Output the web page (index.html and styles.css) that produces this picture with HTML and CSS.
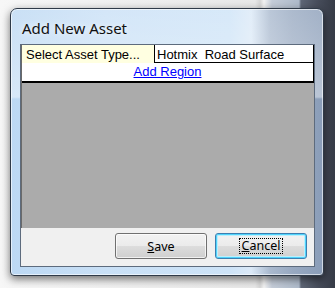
FILE: index.html
```html
<!DOCTYPE html>
<html lang="en">
<head>
    <meta charset="UTF-8">
    <title>Add New Asset</title>
    <link rel="stylesheet" href="styles.css">
</head>
<body>
    <div class="window">
        <div class="title-bar">Add New Asset</div>
        <div class="client">
            <div class="grid">
                <div class="row">
                    <div class="cell type-cell">Select Asset Type...</div>
                    <div class="cell value-cell">Hotmix  Road Surface</div>
                </div>
                <div class="row link-row">
                    <a href="#" class="add-link">Add Region</a>
                </div>
            </div>
            <div class="button-bar">
                <button class="btn"><u>S</u>ave</button>
                <button class="btn btn-default"><span class="focus"><u>C</u>ancel</span></button>
            </div>
        </div>
    </div>
</body>
</html>
```

FILE: styles.css
```css
html, body {
    margin: 0;
    padding: 0;
}

body {
    width: 335px;
    height: 288px;
    overflow: hidden;
    padding-top: 8px;
    box-sizing: border-box;
    background: linear-gradient(to right, #f7f7f7 0, #e8e8e8 255px, #d6d6d6 260px, #f3f3f3 264px, #c4ccd8 272px, #aebaca 299px, #5e6676 301px, #474d5b 318px, #363b46 335px);
}

.window {
    margin-left: 10px;
    width: 314px;
    height: 268px;
    box-sizing: border-box;
    border: 1px solid #2f3a48;
    border-radius: 7px 7px 4px 4px;
    padding: 0 8px 8px 9px;
    background:
        linear-gradient(to bottom, rgba(255, 255, 255, 0.2) 0, rgba(255, 255, 255, 0.4) 88px, rgba(255, 255, 255, 0) 90px),
        linear-gradient(to right, #bcd8f3 0, #c9e0f6 30%, #cde3f7 70%, #dbe9f7 77%, #a9b9ce 83%, #98a9c1 90%, #8a9db8 100%);
    box-shadow: inset 0 0 0 1px rgba(255, 255, 255, 0.6), 0 3px 9px rgba(0, 0, 0, 0.55);
}

.title-bar {
    height: 35px;
    box-sizing: border-box;
    padding: 9px 0 0 2px;
    font-family: "Noto Sans", sans-serif;
    font-size: 15px;
    line-height: 20px;
    color: #101010;
    text-shadow: 0 0 6px rgba(255, 255, 255, 0.9);
}

.client {
    height: 223px;
    box-sizing: border-box;
    border: 1px solid #5d6b7d;
    background: #f0f0f0;
    display: flex;
    flex-direction: column;
}

.grid {
    height: 183px;
    background: #ababab;
    font-family: "Liberation Sans", Arial, sans-serif;
    font-size: 13px;
    border-left: 1px solid #6a6a6a;
}

.row {
    display: flex;
    height: 19px;
    box-sizing: border-box;
    border-bottom: 1px solid #000;
    border-right: 1px solid #000;
    background: #fff;
}

.row:first-child {
    height: 18px;
}

.cell {
    height: 18px;
    box-sizing: border-box;
    padding: 2px 0 0 4px;
    line-height: 16px;
    white-space: pre;
}

.type-cell {
    width: 133px;
    background: #ffffe1;
    border-right: 1px solid #000;
}

.value-cell {
    flex: 1;
    padding-left: 2px;
}

.link-row {
    height: 20px;
    border-bottom-width: 2px;
    justify-content: center;
    padding-top: 1px;
    line-height: 16px;
}

.add-link {
    color: #0000ff;
    text-decoration: underline;
}

.button-bar {
    flex: 1;
    display: flex;
    justify-content: flex-end;
    gap: 8px;
    padding: 5px 7px 0 0;
}

.btn {
    width: 92px;
    height: 26px;
    box-sizing: border-box;
    border: 1px solid #707070;
    border-radius: 3px;
    background: linear-gradient(to bottom, #f2f2f2 0, #ebebeb 50%, #dddddd 50%, #cfcfcf 100%);
    box-shadow: inset 0 0 0 1px rgba(255, 255, 255, 0.7);
    font-family: "Noto Sans", sans-serif;
    font-size: 12.5px;
    color: #000;
    padding: 0;
    display: flex;
    align-items: center;
    justify-content: center;
}

.btn-default {
    border-color: #3c7fb1;
    box-shadow: inset 0 0 0 1px #4fd3fb, inset 0 0 0 2px #bdeefc;
}

.focus {
    border: 1px dotted #000;
    padding: 0 2px;
    line-height: 14px;
}
```
